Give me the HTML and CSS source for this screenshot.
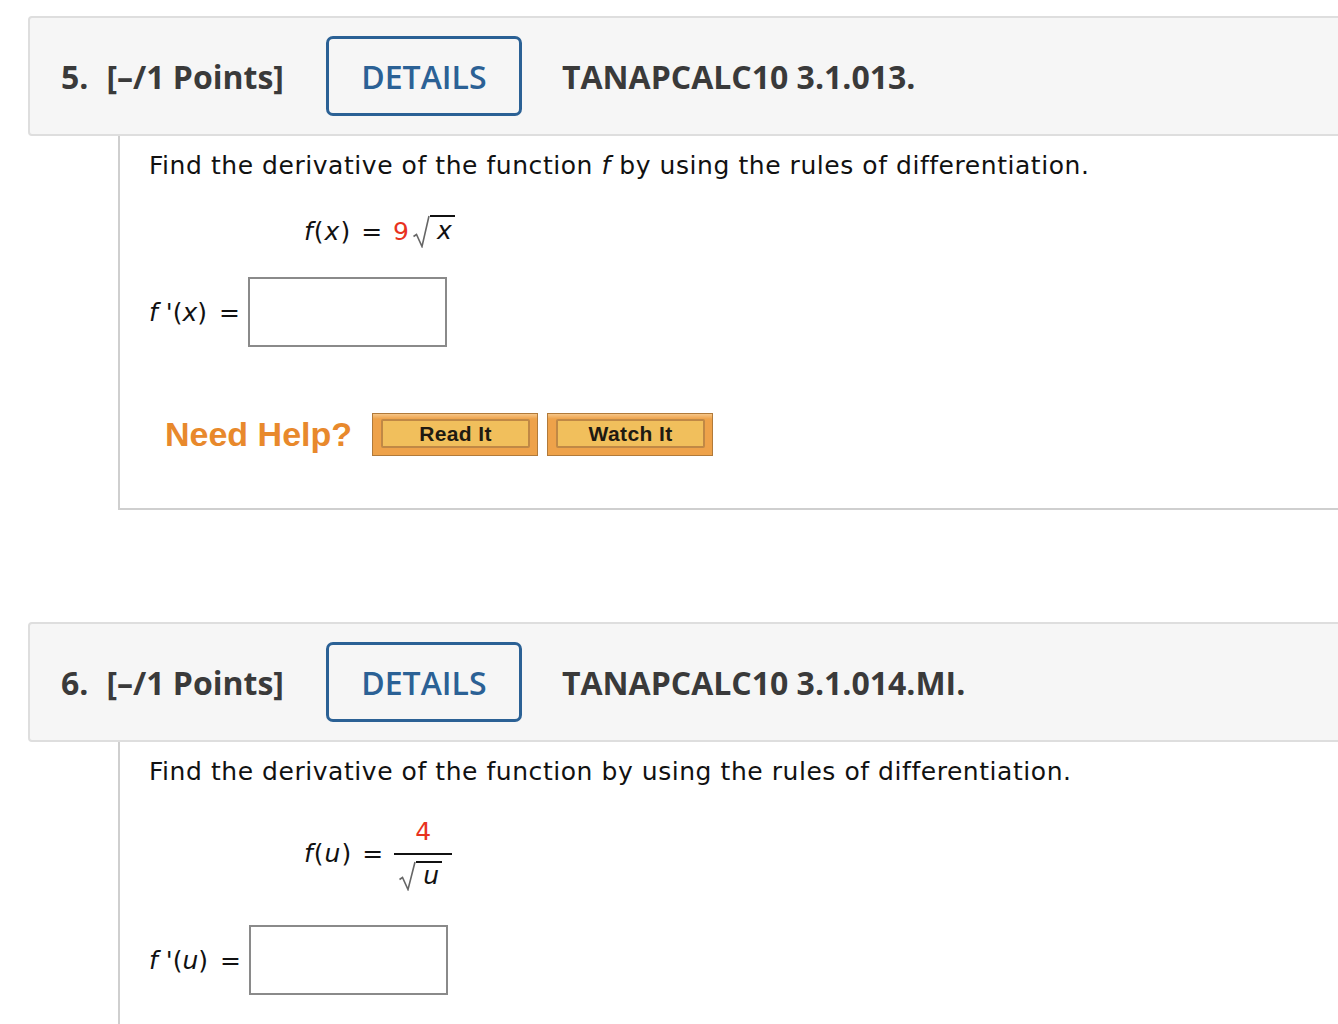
FILE: index.html
```html
<!DOCTYPE html>
<html>
<head>
<meta charset="utf-8">
<link rel="stylesheet" href="styles.css">
</head>
<body>
<div class="question">
  <div class="qhead">
    <span class="qnum">5.</span>
    <span class="qpts">[–/1 Points]</span>
    <span class="details">DETAILS</span>
    <span class="qcode">TANAPCALC10 3.1.013.</span>
  </div>
  <div class="qbody">
    <p class="prompt">Find the derivative of the function <i>f</i> by using the rules of differentiation.</p>
    <div class="eq"><span class="lhs"><i>f</i>(<i>x</i>)</span><span class="eqs">=</span><span class="red">9</span><span class="sqrt"><svg class="radsvg" width="17" height="33" viewBox="0 0 17 33"><path d="M0.5 21.5 L3.5 19.5 L9 31.5 L16 1" fill="none" stroke="#666" stroke-width="1.6"/></svg><span class="radicand"><i>x</i></span></span></div>
    <div class="answer"><span class="alabel"><i>f</i> '(<i>x</i>)</span><span class="aeq">=</span><span class="abox"></span></div>
    <div class="help">
      <span class="needhelp">Need Help?</span>
      <span class="hbtn"><span class="hin">Read It</span></span>
      <span class="hbtn"><span class="hin">Watch It</span></span>
    </div>
  </div>
</div>

<div class="question q2">
  <div class="qhead">
    <span class="qnum">6.</span>
    <span class="qpts">[–/1 Points]</span>
    <span class="details">DETAILS</span>
    <span class="qcode">TANAPCALC10 3.1.014.MI.</span>
  </div>
  <div class="qbody">
    <p class="prompt">Find the derivative of the function by using the rules of differentiation.</p>
    <div class="eq eq2"><span class="lhs"><i>f</i>(<i>u</i>)</span><span class="eqs">=</span>
      <span class="frac"><span class="num red">4</span><span class="den"><span class="sqrt"><svg class="radsvg" width="17" height="30" viewBox="0 0 17 30"><path d="M0.5 18.5 L3.5 16.5 L9 28.5 L16 1" fill="none" stroke="#666" stroke-width="1.6"/></svg><span class="radicand"><i>u</i></span></span></span></span>
    </div>
    <div class="answer a2"><span class="alabel"><i>f</i> '(<i>u</i>)</span><span class="aeq">=</span><span class="abox"></span></div>
  </div>
</div>
</body>
</html>
```
FILE: styles.css
```css
html, body { margin: 0; padding: 0; background: #fff; }
body { padding-top: 16px; overflow: hidden; width: 1338px; }
.question { margin-left: 28px; width: 1340px; }
.q2 { margin-top: 112px; }
.qhead {
  box-sizing: border-box;
  height: 120px;
  background: #f6f6f6;
  border: 2px solid #dedede;
  border-radius: 4px 0 0 4px;
  display: flex;
  align-items: center;
  padding-left: 31px;
  font-family: "Open Sans", sans-serif;
  color: #3a3a3a;
  font-weight: 700;
  font-size: 32px;
}
.qnum { margin-right: 18px; }
.qpts { margin-right: 42px; }
.details {
  box-sizing: border-box;
  width: 196px; height: 80px;
  border: 3px solid #2b6195;
  border-radius: 7px;
  display: flex; align-items: center; justify-content: center;
  color: #2b6195; font-weight: 600; font-size: 32px;
  margin-right: 40px;
}
.qcode { font-size: 32px; }
.qbody {
  margin-left: 90px;
  border-left: 2px solid #cfcfcf;
  border-bottom: 2px solid #cfcfcf;
  height: 374px;
  box-sizing: border-box;
  padding-left: 29px;
  font-family: "DejaVu Sans", Verdana, sans-serif;
  font-size: 25px;
  color: #111;
}
.q2 .qbody { border-bottom: none; height: 300px; }
.prompt { margin: 0; padding-top: 14px; line-height: 32px; letter-spacing: 0.55px; }
.eq { margin-left: 155px; margin-top: 33px; line-height: 32px; display: flex; align-items: center; }
.lhs { letter-spacing: 1px; }
.eqs { margin: 0 11px 0 10px; }
.red { color: #e8321e; }
.sqrt { display: inline-flex; align-items: flex-start; margin-left: 4px; }
.radsvg { display: block; }
.radicand { border-top: 2px solid #111; line-height: 28px; padding: 0 3px 0 7px; }
.answer { display: flex; align-items: center; margin-top: 29px; }
.alabel { margin-right: 12px; }
.aeq { margin-right: 8px; }
.abox { width: 199px; height: 70px; box-sizing: border-box; border: 2px solid #8a8a8a; display: inline-block; }
.help { display: flex; align-items: center; margin-top: 66px; margin-left: 16px; }
.needhelp { font-family: "Liberation Sans", Arial, sans-serif; color: #e8892c; font-size: 34px; font-weight: 700; margin-right: 20px; }
.hbtn {
  box-sizing: border-box; width: 166px; height: 43px;
  background: linear-gradient(#f6c688 0, #eea24a 5px, #eea24a 100%);
  border: 1px solid #b17a3a;
  padding: 5px 7px 7px 8px; margin-right: 9px;
  display: flex;
}
.hin {
  flex: 1; background: #f1bf5c; border: 2px solid #c08845; border-radius: 2px;
  display: flex; align-items: center; justify-content: center;
  font-family: "Liberation Sans", Arial, sans-serif; font-weight: 700; font-size: 21px; color: #1e1a12; letter-spacing: 0.4px;
}
.eq2 { margin-top: 29px; }
.frac { display: inline-flex; flex-direction: column; align-items: center; }
.frac .num { line-height: 30px; padding-bottom: 6px; }
.frac .den { border-top: 2px solid #111; padding: 6px 10px 0 5px; display: flex; line-height: 28px; }
.frac .den .sqrt { margin-left: 0; }
.frac .den .radicand { line-height: 26px; }
.a2 { margin-top: 34px; }
```
